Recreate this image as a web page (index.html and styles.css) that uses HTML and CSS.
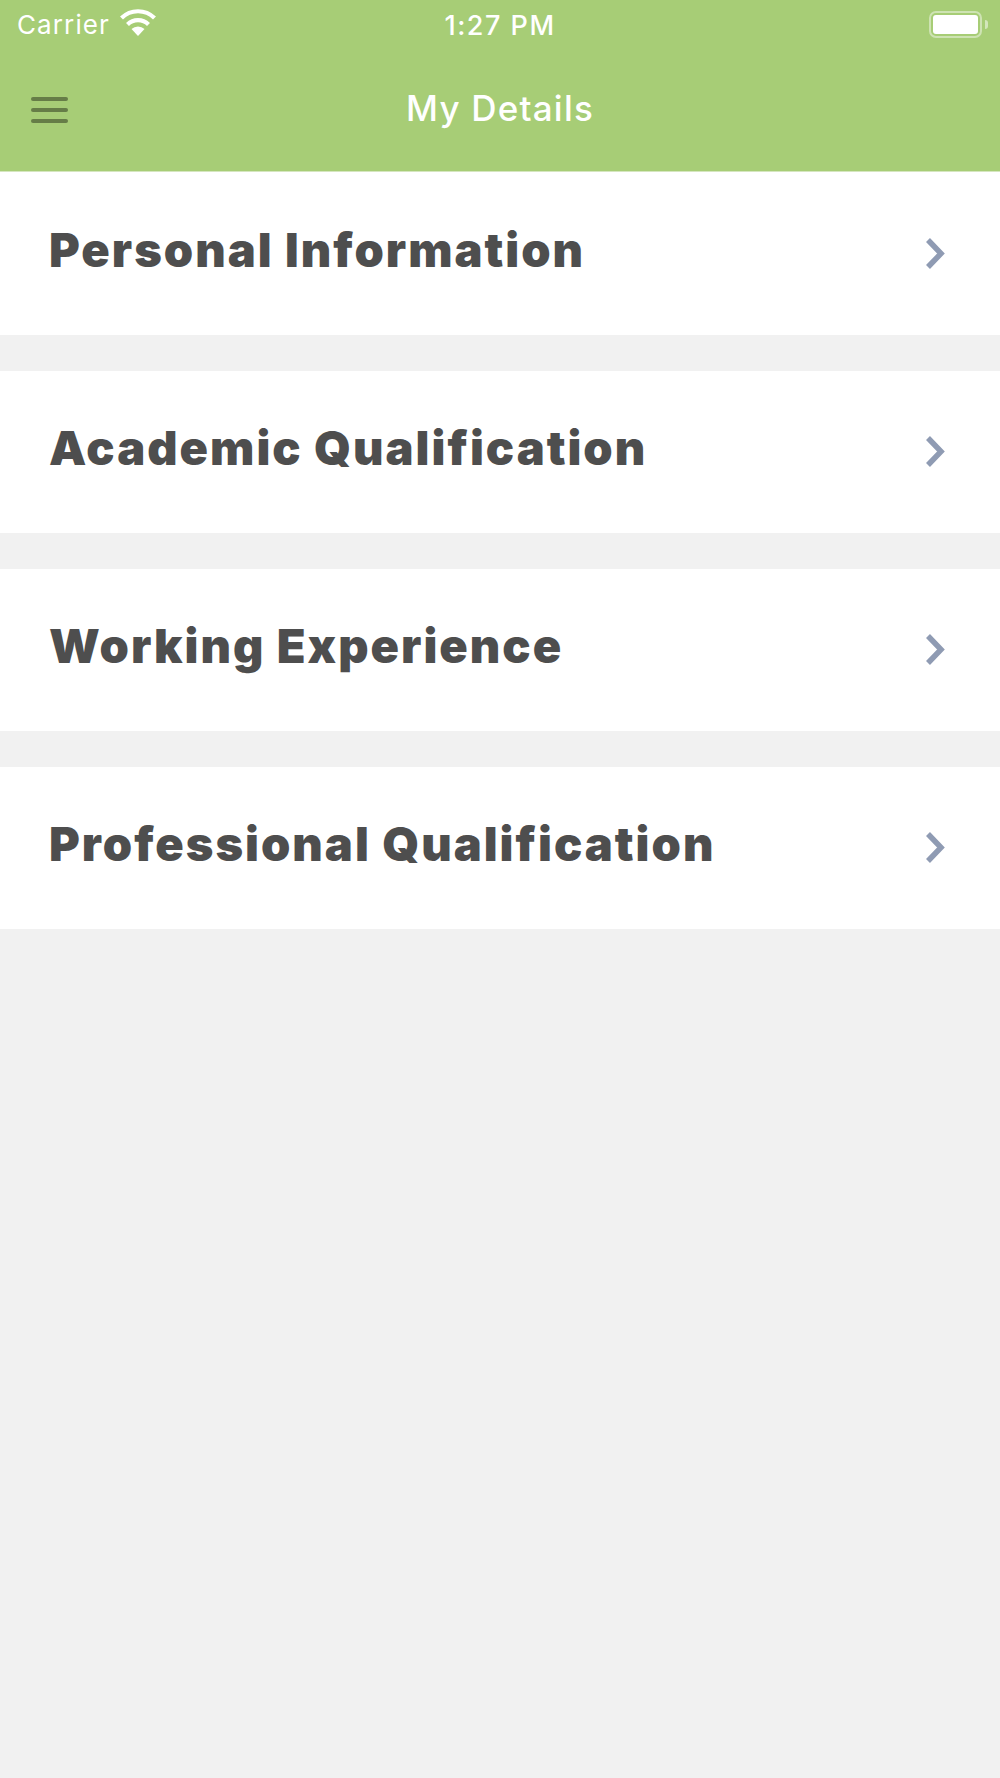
FILE: index.html
```html
<!DOCTYPE html>
<html>
<head>
    <meta charset="UTF-8">
    <title>My Details</title>
    <link rel="stylesheet" href="styles.css">
</head>
<body>
    <div class="header">
        <!-- Barra de estado -->
        <div class="status-bar">
            <div class="status-left">
                <span class="carrier">Carrier</span>
                <svg class="wifi" width="38" height="28" viewBox="0 0 38 28">
                    <path d="M19 27 L12.5 20 A9.5 9.5 0 0 1 25.500 20 Z" fill="#fff"/>
                    <path d="M8.500 15.500 A15 15 0 0 1 29.500 15.500" fill="none" stroke="#fff" stroke-width="4.200"/>
                    <path d="M2.500 9 A23.500 23.500 0 0 1 35.500 9" fill="none" stroke="#fff" stroke-width="4.200"/>
                </svg>
            </div>
            <span class="time">1:27 PM</span>
            <div class="battery">
                <div class="battery-body"><div class="battery-fill"></div></div>
                <div class="battery-tip"></div>
            </div>
        </div>
        <!-- Barra de navegacion -->
        <div class="nav-bar">
            <div class="menu-icon">
                <span></span>
                <span></span>
                <span></span>
            </div>
            <h1>My Details</h1>
        </div>
    </div>

    <div class="list">
        <div class="row">
            <span class="row-title">Personal Information</span>
            <svg class="chevron" width="20" height="33" viewBox="0 0 20 33"><path d="M3 3 L16 16.500 L3 30" /></svg>
        </div>
        <div class="row">
            <span class="row-title">Academic Qualification</span>
            <svg class="chevron" width="20" height="33" viewBox="0 0 20 33"><path d="M3 3 L16 16.500 L3 30" /></svg>
        </div>
        <div class="row">
            <span class="row-title">Working Experience</span>
            <svg class="chevron" width="20" height="33" viewBox="0 0 20 33"><path d="M3 3 L16 16.500 L3 30" /></svg>
        </div>
        <div class="row">
            <span class="row-title">Professional Qualification</span>
            <svg class="chevron" width="20" height="33" viewBox="0 0 20 33"><path d="M3 3 L16 16.500 L3 30" /></svg>
        </div>
    </div>
</body>
</html>
```

FILE: styles.css
```css
body {
    font-family: "Inter", "Liberation Sans", sans-serif;
    background-color: #f1f1f1;
    margin: 0;
    padding: 0;
    min-height: 1778px;
}

.header {
    background-color: #a7cd76;
    color: #fff;
    height: 171px;
    border-bottom: 1px solid #d5e6bf;
}

.status-bar {
    height: 50px;
    display: flex;
    align-items: center;
    justify-content: space-between;
    position: relative;
    padding: 0 12px 0 17px;
}

.status-left {
    display: flex;
    align-items: center;
    gap: 9px;
}

.carrier {
    font-size: 26px;
    letter-spacing: 1.1px;
    line-height: 52px;
}

.time {
    position: absolute;
    left: 0;
    right: 0;
    text-align: center;
    font-size: 27px;
    font-weight: 500;
    letter-spacing: 1.5px;
}

.wifi {
    margin-top: -4px;
}

.battery {
    display: flex;
    align-items: center;
    gap: 3px;
    margin-top: -2px;
}

.battery-body {
    width: 53px;
    height: 27px;
    box-sizing: border-box;
    border: 2px solid rgba(255, 255, 255, 0.45);
    border-radius: 7px;
    padding: 2px;
}

.battery-fill {
    height: 100%;
    background-color: #fff;
    border-radius: 3px;
}

.battery-tip {
    width: 3px;
    height: 9px;
    background-color: rgba(255, 255, 255, 0.5);
    border-radius: 0 3px 3px 0;
}

.nav-bar {
    height: 121px;
    display: flex;
    align-items: center;
    justify-content: center;
    position: relative;
}

.nav-bar h1 {
    margin: 0 0 5px;
    font-size: 35px;
    font-weight: 500;
    letter-spacing: 1.2px;
}

.menu-icon {
    position: absolute;
    left: 31px;
    top: 47px;
    display: flex;
    flex-direction: column;
    gap: 7px;
}

.menu-icon span {
    display: block;
    width: 37px;
    height: 4px;
    background-color: #667d47;
    border-radius: 2px;
}

.list {
    display: flex;
    flex-direction: column;
    gap: 36px;
    border-top: 1px solid #fff;
}

.row {
    height: 162px;
    background-color: #fff;
    display: flex;
    align-items: center;
    justify-content: space-between;
    padding: 0 55px 0 49px;
}

.row-title {
    font-size: 47px;
    font-weight: 900;
    letter-spacing: 2px;
    color: #4e4e4e;
    margin-top: -10px;
}

.chevron {
    fill: none;
    stroke: #8f9bb3;
    stroke-width: 5.500;
    margin-top: -2px;
}
```
